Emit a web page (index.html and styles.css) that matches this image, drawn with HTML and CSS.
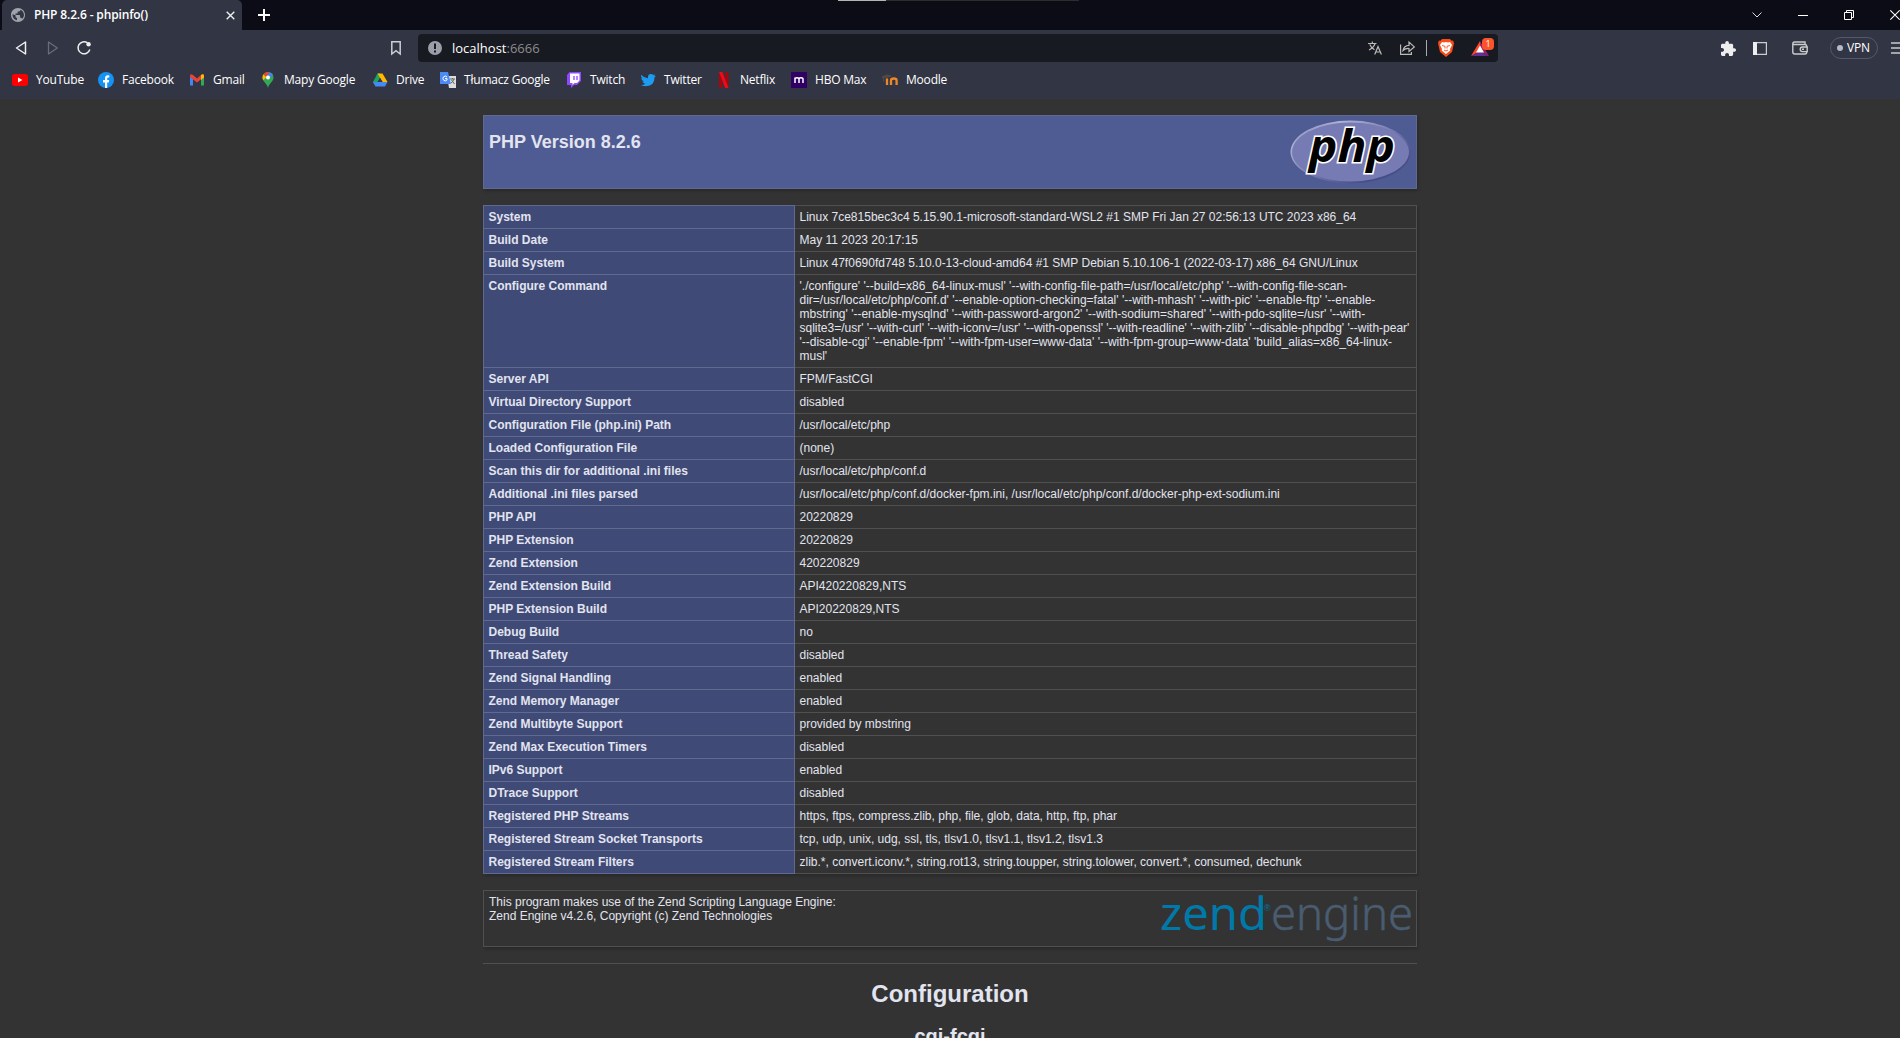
FILE: index.html
```html
<!DOCTYPE html>
<html lang="en">
<head>
<meta charset="utf-8">
<title>PHP 8.2.6 - phpinfo()</title>
<link rel="stylesheet" href="styles.css">
</head>
<body>
<header class="browser">
  <div class="tabstrip">
    <div class="tab">
      <svg class="tab-globe" width="14" height="14" viewBox="2 2 20 20"><path fill="#a0a3ac" d="M12 2C6.480 2 2 6.480 2 12s4.480 10 10 10 10-4.480 10-10S17.520 2 12 2zM4.200 11l4.300 1.500v1.500c0 1.100.9 2 2 2v3.500C6.800 19 4 15.500 4.200 11zm13.700 6.400c-.3-.8-1-1.400-1.900-1.400h-1v-3c0-.6-.5-1-1-1H8.500v-2h2c.6 0 1-.5 1-1V7h2c1.100 0 2-.9 2-2v-.4c2.900 1.200 5 4.100 5 7.400 0 2.100-.8 4-2.600 5.400z"/></svg>
      <span class="tab-title">PHP 8.2.6 - phpinfo()</span>
      <svg class="tab-close" width="9" height="9" viewBox="0 0 9 9"><path d="M.7.7l7.6 7.6M8.3.7L.7 8.3" stroke="#eee" stroke-width="1.4"/></svg>
    </div>
    <svg class="new-tab" width="12" height="12" viewBox="0 0 12 12"><path d="M6 0v12M0 6h12" stroke="#fff" stroke-width="2"/></svg>
    <div class="screen-notch"></div>
    <div class="window-buttons">
      <svg width="10" height="10" viewBox="0 0 10 10"><path d="M.5 2.500l4.500 4.500 4.500-4.500" fill="none" stroke="#ddd"/></svg>
      <svg width="10" height="10" viewBox="0 0 10 10"><path d="M0 5.500h10" stroke="#fff"/></svg>
      <svg width="10" height="10" viewBox="0 0 10 10"><path d="M.5 2.500h7v7h-7zM2.500 2.500v-2h7v7h-2" fill="none" stroke="#fff"/></svg>
      <svg width="10" height="10" viewBox="0 0 10 10"><path d="M.3.3l9.400 9.400M9.700.3L.3 9.700" stroke="#fff" stroke-width="1.100"/></svg>
    </div>
  </div>
  <div class="toolbar">
    <div class="nav">
      <svg width="12" height="14" viewBox="0 0 12 14"><path d="M10.500 1v12L1.500 7z" fill="none" stroke="#eee" stroke-width="1.500" stroke-linejoin="round"/></svg>
      <svg width="12" height="14" viewBox="0 0 12 14"><path d="M2.500 1v12l8.800-6z" fill="none" stroke="#696c79" stroke-width="1.300" stroke-linejoin="round"/></svg>
      <svg width="14" height="14" viewBox="0 0 14 14"><path d="M10.500 1.900A6 6 0 1 0 12.800 8.500" fill="none" stroke="#eee" stroke-width="1.500"/><circle cx="11.600" cy="3.300" r="2.200" fill="#eee"/></svg>
    </div>
    <svg class="bookmark" width="10" height="14" viewBox="0 0 10 14"><path d="M.8.8h8.400v12.200L5 9.600.8 13z" fill="none" stroke="#ccced4" stroke-width="1.500"/></svg>
    <div class="address">
      <svg class="site-info" width="14" height="14" viewBox="0 0 14 14"><circle cx="7" cy="7" r="7" fill="#9b9ea8"/><path d="M7 2.500v5.500M7 9.500v2" stroke="#181a21" stroke-width="2"/></svg>
      <span class="url">localhost<span class="port">:6666</span></span>
      <div class="address-actions">
        <svg width="14" height="14" viewBox="0 0 14 14" fill="none" stroke="#bbb" stroke-width="1.200"><path d="M0 2.500h8.500M4.300.5v2M7 2.800Q5.500 7 1 9M1.800 3.500Q3.500 7.500 6.500 8.800M6.700 13.500L10 5.500l3.400 8M8 11h4"/></svg>
        <svg width="15" height="14" viewBox="0 0 15 14" fill="none" stroke="#bbb" stroke-width="1.200"><path d="M.6 3.500v9.900h10.800v-2.500M3 9.500Q4 4.500 9 4.300V1l5.300 4.900L9 10.500V7.500Q5.500 7.200 3 9.500z"/></svg>
        <i class="separator"></i>
        <svg width="16" height="18" viewBox="0 0 16 18"><path d="M4 0h8l1.500 1.700L15 1.500l1 2.500-2 9L8 18l-6-5L0 4l1-2.500 1.500.2z" fill="#fb4b17"/><path d="M4 3l2 .5 2-.5 2 .5 2-.5 2 3-2 4 .3 1.500L8 15l-4.300-3.500L4 10 2 6z" fill="#fff"/><path d="M4 6.500l3 .8v2.200M12 6.500l-3 .8v2.200M6 11l2 1 2-1" fill="none" stroke="#fb4b17" stroke-width=".9"/></svg>
        <div class="rewards">
          <svg width="18" height="15" viewBox="0 0 18 15"><path d="M9 0L0 15l9-5z" fill="#ff4724"/><path d="M9 0l9 15-9-5z" fill="#9e1f63"/><path d="M0 15l9-5 9 5z" fill="#662d91"/><path d="M9 4.500l4 7H5z" fill="#fff"/></svg>
          <span class="badge">1</span>
        </div>
      </div>
    </div>
    <div class="extensions">
      <svg class="puzzle" width="15" height="15" viewBox="2 1 21 21"><path fill="#eee" d="M20.500 11H19V7c0-1.100-.9-2-2-2h-4V3.500C13 2.120 11.880 1 10.500 1S8 2.120 8 3.500V5H4c-1.100 0-1.990.9-1.990 2v3.800H3.500c1.490 0 2.700 1.210 2.700 2.700s-1.210 2.700-2.700 2.700H2V20c0 1.100.9 2 2 2h3.800v-1.500c0-1.490 1.210-2.700 2.700-2.700s2.700 1.210 2.700 2.700V22H17c1.100 0 2-.9 2-2v-4h1.500c1.380 0 2.500-1.120 2.500-2.500S21.880 11 20.500 11z"/></svg>
      <svg class="sidebar" width="14" height="13" viewBox="0 0 14 13"><path d="M.6.6h12.800v11.800H.6z" fill="none" stroke="#ccc" stroke-width="1.200"/><path d="M0 0h4v13H0z" fill="#eee"/></svg>
      <svg class="wallet" width="16" height="14" viewBox="0 0 16 14" fill="none" stroke="#ccc" stroke-width="1.400"><path d="M13 3.500V1H2.500Q.8 1 .8 3v8q0 2 2 2H13q1.700 0 1.700-2M1 3.500h12q1.700 0 1.700 2M15.200 6H10.500a2.200 2.200 0 0 0 0 4.600h4.700zM10 8.300h2"/></svg>
      <div class="vpn"><i></i><span>VPN</span></div>
      <svg class="menu" width="9" height="12" viewBox="0 0 9 12"><path d="M0 1h9M0 6h9M0 11h9" stroke="#ccc" stroke-width="1.600"/></svg>
    </div>
  </div>
  <nav class="bookmarks">
    <a><svg width="16" height="16" viewBox="0 0 16 16"><rect y="2" width="16" height="12" rx="3" fill="#f00"/><path d="M6 5.500v5l4.500-2.500z" fill="#fff"/></svg><span>YouTube</span></a>
    <a><svg width="16" height="16" viewBox="0 0 16 16"><circle cx="8" cy="8" r="8" fill="#1593f5"/><path d="M7 16v-5.500H5V8h2V6.200Q7 3.300 10 3.300l1.300.1v2H10.200Q9.200 5.400 9.200 6.500V8h2l-.4 2.500H9.200V16z" fill="#fff"/></svg><span>Facebook</span></a>
    <a><svg width="16" height="16" viewBox="0 0 16 16"><path d="M1 4v9.500h3V7z" fill="#4285f4"/><path d="M12 7v6.500h3V4z" fill="#34a853"/><path d="M1 3.500Q1.500 1.500 4 3l4 3.500L12 3q2.500-1.500 3 .5V5l-7 5.500L1 5z" fill="#ea4335"/><path d="M12 3q2.500-1.500 3 .5V5.500L12 8z" fill="#fbbc04"/></svg><span>Gmail</span></a>
    <a><svg width="16" height="16" viewBox="0 0 16 16"><path d="M8 0a5.500 5.500 0 0 1 5.500 5.500C13.500 10 9 11 8 16 7 11 2.500 10 2.500 5.500A5.500 5.500 0 0 1 8 0z" fill="#34a853"/><path d="M3.300 8.300A5.500 5.500 0 0 1 3.500 2.300L6.500 5z" fill="#fbbc04"/><path d="M3.500 2.300A5.500 5.500 0 0 1 9.500.2L6 5z" fill="#ea4335"/><path d="M9.500.2a5.500 5.500 0 0 1 3.300 2.800L10 6 8 3z" fill="#4285f4"/><circle cx="8" cy="5.500" r="2" fill="#fff"/></svg><span>Mapy Google</span></a>
    <a><svg width="16" height="16" viewBox="0 0 16 16"><path d="M5.500 1.500h2.500L8 6 3.500 14.500 1 10z" fill="#1ea362"/><path d="M5.500 1.500h5L15.500 10h-5z" fill="#ffba00"/><path d="M1 10h14.500L13 14.500H3.500z" fill="#4688f4"/><path d="M8 6l2.500 4h-5z" fill="#323544"/></svg><span>Drive</span></a>
    <a><svg width="16" height="16" viewBox="0 0 16 16"><path d="M7 4h9v12H9z" fill="#ddd"/><path d="M0 0h8l3 12H0z" fill="#4c8bf5"/><path d="M7 5A2.300 2.300 0 1 0 7 8V6.600H5" stroke="#fff" fill="none"/><path d="M10 7h5M12.500 6v1M14 7q-1 3-3 4M11.500 8l3 4" stroke="#666" fill="none"/></svg><span>Tłumacz Google</span></a>
    <a><svg width="16" height="16" viewBox="0 0 16 16"><path d="M3.500 0H15v9l-4 4H8l-3 3v-3H1V3z" fill="#9146ff"/><path d="M4 1.500h9.500v7L11 11H8.500l-2 2v-2H4z" fill="#fff"/><path d="M8 4v4M11 4v4" stroke="#9146ff" stroke-width="1.300"/></svg><span>Twitch</span></a>
    <a><svg width="16" height="16" viewBox="0 0 16 16"><path d="M1 2.800q3 3.300 7 3.500Q7.500 2 11 2q1.500 0 2.300 1L15.200 2.300l-1 1.900L16 3.900 14.500 5.500Q14.500 14 6 14.200 3 14.200 1 13q3 0 4.300-1.300Q3 11.500 2.500 9.500H4Q1.300 8.500 1.200 6L2.600 6.500Q.3 4.800 1 2.800z" fill="#1d9bf0"/></svg><span>Twitter</span></a>
    <a><svg width="16" height="16" viewBox="0 0 16 16"><path d="M3 0h3.200v16H3zM9.300 0h3.200v16H9.300z" fill="#a50710"/><path d="M3 0h3.400l6.100 16H9.100z" fill="#f00a15"/></svg><span>Netflix</span></a>
    <a><svg width="16" height="16" viewBox="0 0 16 16"><rect width="16" height="16" rx=".5" fill="#310064"/><path d="M4 11V5.500M4 7q0-1.300 2-1.300T8 7v4M8 7q0-1.300 2-1.300T12 7v4" fill="none" stroke="#fff" stroke-width="1.500"/></svg><span>HBO Max</span></a>
    <a><svg width="16" height="16" viewBox="0 0 16 16"><path d="M0 5l5-2 4 1-5 1.500zM1.500 5.500v4" fill="#4d4542" stroke="#594b43"/><path d="M5 13V6.500M9 13V8.500q0-2 2.800-2t2.800 2V13" fill="none" stroke="#ee8728" stroke-width="2.300"/></svg><span>Moodle</span></a>
  </nav>
</header>
<main class="phpinfo">
  <section class="banner">
    <h1>PHP Version 8.2.6</h1>
    <svg class="php-logo" width="121" height="64" viewBox="0 0 121 64">
      <defs>
        <linearGradient id="rim" x1="0" y1="0" x2="1" y2="1"><stop offset="0" stop-color="#7377ad"/><stop offset=".22" stop-color="#aeb2d5"/><stop offset=".5" stop-color="#777bb3"/><stop offset=".8" stop-color="#484c89"/><stop offset="1" stop-color="#484c89"/></linearGradient>
      </defs>
      <ellipse cx="60.500" cy="32" rx="60" ry="31.500" fill="url(#rim)"/>
      <ellipse cx="60.500" cy="32" rx="58.500" ry="29.500" fill="#777bb3"/>
      <text class="php-word" x="19" y="41.500" textLength="86" lengthAdjust="spacingAndGlyphs">php</text>
    </svg>
  </section>
  <table>
    <tr><th>System </th><td>Linux 7ce815bec3c4 5.15.90.1-microsoft-standard-WSL2 #1 SMP Fri Jan 27 02:56:13 UTC 2023 x86_64</td></tr>
    <tr><th>Build Date</th><td>May 11 2023 20:17:15</td></tr>
    <tr><th>Build System</th><td>Linux 47f0690fd748 5.10.0-13-cloud-amd64 #1 SMP Debian 5.10.106-1 (2022-03-17) x86_64 GNU/Linux</td></tr>
    <tr><th>Configure Command</th><td>'./configure' '--build=x86_64-linux-musl' '--with-config-file-path=/usr/local/etc/php' '--with-config-file-scan-<br>dir=/usr/local/etc/php/conf.d' '--enable-option-checking=fatal' '--with-mhash' '--with-pic' '--enable-ftp' '--enable-<br>mbstring' '--enable-mysqlnd' '--with-password-argon2' '--with-sodium=shared' '--with-pdo-sqlite=/usr' '--with-<br>sqlite3=/usr' '--with-curl' '--with-iconv=/usr' '--with-openssl' '--with-readline' '--with-zlib' '--disable-phpdbg' '--with-pear'<br>'--disable-cgi' '--enable-fpm' '--with-fpm-user=www-data' '--with-fpm-group=www-data' 'build_alias=x86_64-linux-<br>musl'</td></tr>
    <tr><th>Server API</th><td>FPM/FastCGI</td></tr>
    <tr><th>Virtual Directory Support</th><td>disabled</td></tr>
    <tr><th>Configuration File (php.ini) Path</th><td>/usr/local/etc/php</td></tr>
    <tr><th>Loaded Configuration File</th><td>(none)</td></tr>
    <tr><th>Scan this dir for additional .ini files</th><td>/usr/local/etc/php/conf.d</td></tr>
    <tr><th>Additional .ini files parsed</th><td>/usr/local/etc/php/conf.d/docker-fpm.ini, /usr/local/etc/php/conf.d/docker-php-ext-sodium.ini</td></tr>
    <tr><th>PHP API</th><td>20220829</td></tr>
    <tr><th>PHP Extension</th><td>20220829</td></tr>
    <tr><th>Zend Extension</th><td>420220829</td></tr>
    <tr><th>Zend Extension Build</th><td>API420220829,NTS</td></tr>
    <tr><th>PHP Extension Build</th><td>API20220829,NTS</td></tr>
    <tr><th>Debug Build</th><td>no</td></tr>
    <tr><th>Thread Safety</th><td>disabled</td></tr>
    <tr><th>Zend Signal Handling</th><td>enabled</td></tr>
    <tr><th>Zend Memory Manager</th><td>enabled</td></tr>
    <tr><th>Zend Multibyte Support</th><td>provided by mbstring</td></tr>
    <tr><th>Zend Max Execution Timers</th><td>disabled</td></tr>
    <tr><th>IPv6 Support</th><td>enabled</td></tr>
    <tr><th>DTrace Support</th><td>disabled</td></tr>
    <tr><th>Registered PHP Streams</th><td>https, ftps, compress.zlib, php, file, glob, data, http, ftp, phar</td></tr>
    <tr><th>Registered Stream Socket Transports</th><td>tcp, udp, unix, udg, ssl, tls, tlsv1.0, tlsv1.1, tlsv1.2, tlsv1.3</td></tr>
    <tr><th>Registered Stream Filters</th><td>zlib.*, convert.iconv.*, string.rot13, string.toupper, string.tolower, convert.*, consumed, dechunk</td></tr>
  </table>
  <section class="zend">
    <p>This program makes use of the Zend Scripting Language Engine:<br>Zend Engine v4.2.6, Copyright (c) Zend Technologies</p>
    <svg class="zend-logo" width="252" height="50" viewBox="0 0 252 50">
      <text x="1" y="35" class="zend-word" textLength="107" lengthAdjust="spacingAndGlyphs">zend</text>
      <text x="105" y="16" class="zend-mark">®</text>
      <text x="112" y="35" class="engine-word" textLength="142" lengthAdjust="spacingAndGlyphs">engine</text>
    </svg>
  </section>
  <hr>
  <h1 class="chapter">Configuration</h1>
  <h2>cgi-fcgi</h2>
</main>
</body>
</html>
```
FILE: styles.css
```css
* { box-sizing: border-box; }
html, body { height: 100%; }
body {
  margin: 0;
  overflow: hidden;
  background: #333;
  color: #e2e4ef;
  font-family: "Liberation Sans", Arial, sans-serif;
}
svg { display: block; flex: none; overflow: visible; }

.browser {
  height: 99px;
  background: #323544;
  color: #fff;
  font: 12px/16px "Open Sans", "Noto Sans", sans-serif;
}
.tabstrip {
  position: relative;
  display: flex;
  align-items: center;
  height: 30px;
  padding-left: 2px;
  overflow: hidden;
  background: #0b0c15;
}
.tab {
  display: flex;
  align-items: center;
  width: 240px;
  height: 30px;
  padding: 0 7px 0 9px;
  border-radius: 5px 5px 0 0;
  background: #323544;
}
.tab-title { margin-left: 9px; font-weight: 600; letter-spacing: -.15px; white-space: nowrap; }
.tab-close { margin-left: auto; }
.new-tab { margin-left: 16px; }
.screen-notch {
  position: absolute;
  top: 0;
  left: 838px;
  width: 241px;
  height: 1px;
  background: linear-gradient(90deg, #b5b5b0 48px, #2c2c2c 48px);
}
.window-buttons { display: flex; gap: 36px; margin-left: auto; padding-bottom: 1px; }

.toolbar { display: flex; align-items: center; height: 36px; overflow: hidden; }
.nav { display: flex; gap: 19px; width: 391px; padding-left: 15px; }
.address {
  display: flex;
  align-items: center;
  width: 1080px;
  height: 28px;
  margin-left: 17px;
  padding: 0 4px 0 10px;
  border-radius: 4px;
  background: #181a21;
}
.url { margin-left: 10px; font-size: 13px; }
.port { color: #8b8c90; }
.address-actions { display: flex; align-items: center; margin-left: auto; }
.address-actions > svg:nth-child(2) { margin-left: 18px; }
.separator { width: 1px; height: 16px; margin: 0 11px; background: #aaa; }
.rewards { position: relative; width: 23px; margin-left: 17px; }
.badge {
  position: absolute;
  top: -3px;
  right: 0;
  width: 12px;
  height: 12px;
  border-radius: 4px;
  background: #fb542b;
  font-size: 9px;
  line-height: 12px;
  text-align: center;
}
.extensions { display: flex; align-items: center; margin-left: 223px; }
.sidebar { margin-left: 17px; }
.wallet { margin-left: 25px; }
.vpn {
  display: flex;
  align-items: center;
  gap: 4px;
  width: 48px;
  height: 22px;
  margin-left: 22px;
  padding-left: 6px;
  border: 1px solid #555869;
  border-radius: 11px;
  letter-spacing: -.2px;
}
.vpn i { width: 6px; height: 6px; border-radius: 50%; background: #b5b7ca; }
.menu { margin-left: 13px; }

.bookmarks {
  display: grid;
  grid-template-columns: 86px 91px 71px 112px 68px 126px 74px 76px 75px 91px 80px;
  align-items: center;
  height: 28px;
  padding-left: 12px;
}
.bookmarks a { display: flex; align-items: center; gap: 8px; white-space: nowrap; letter-spacing: -.2px; }

.phpinfo { width: 934px; margin: 16px auto 0; }
.banner, .zend {
  display: flex;
  justify-content: space-between;
  border: 1px solid #606a90;
  box-shadow: 1px 2px 3px rgba(0, 0, 0, .2);
}
.banner { height: 74px; padding: 4px 5px 0; background: #4f5b93; }
h1, h2, p { margin: 0; }
.banner h1 { margin-top: 12px; font-size: 18px; line-height: 21px; }
.php-word {
  fill: #000;
  stroke: #fff;
  stroke-width: 3px;
  paint-order: stroke;
  font: italic 700 44px "Open Sans", sans-serif;
}
table {
  width: 934px;
  margin: 16px 0;
  border-collapse: collapse;
  table-layout: fixed;
  box-shadow: 1px 2px 3px rgba(0, 0, 0, .2);
}
th, td {
  padding: 4px 5px 4px 4.5px;
  border: 1px solid #505050;
  font-size: 12px;
  line-height: 14px;
  text-align: left;
  vertical-align: baseline;
}
th { width: 311px; border-color: #606a90; background: #404a77; }
td { white-space: nowrap; }
.zend { height: 57px; padding: 4px 5px; border-color: #505050; font-size: 12px; line-height: 14px; }
.zend-word, .engine-word { font-family: "Noto Sans", sans-serif; font-size: 45px; }
.zend-word { fill: #0079a9; }
.engine-word { fill: #4a5c70; stroke: #4a5c70; stroke-width: .5px; font-weight: 300; }
.zend-mark { fill: #0079a9; font-size: 9px; }
hr { height: 1px; margin: 16px 0 0; border: 0; background: #505050; }
.chapter { margin-top: 16px; font-size: 24px; line-height: 28px; text-align: center; }
h2 { margin-top: 17px; font-size: 20px; line-height: 23px; text-align: center; }
```
